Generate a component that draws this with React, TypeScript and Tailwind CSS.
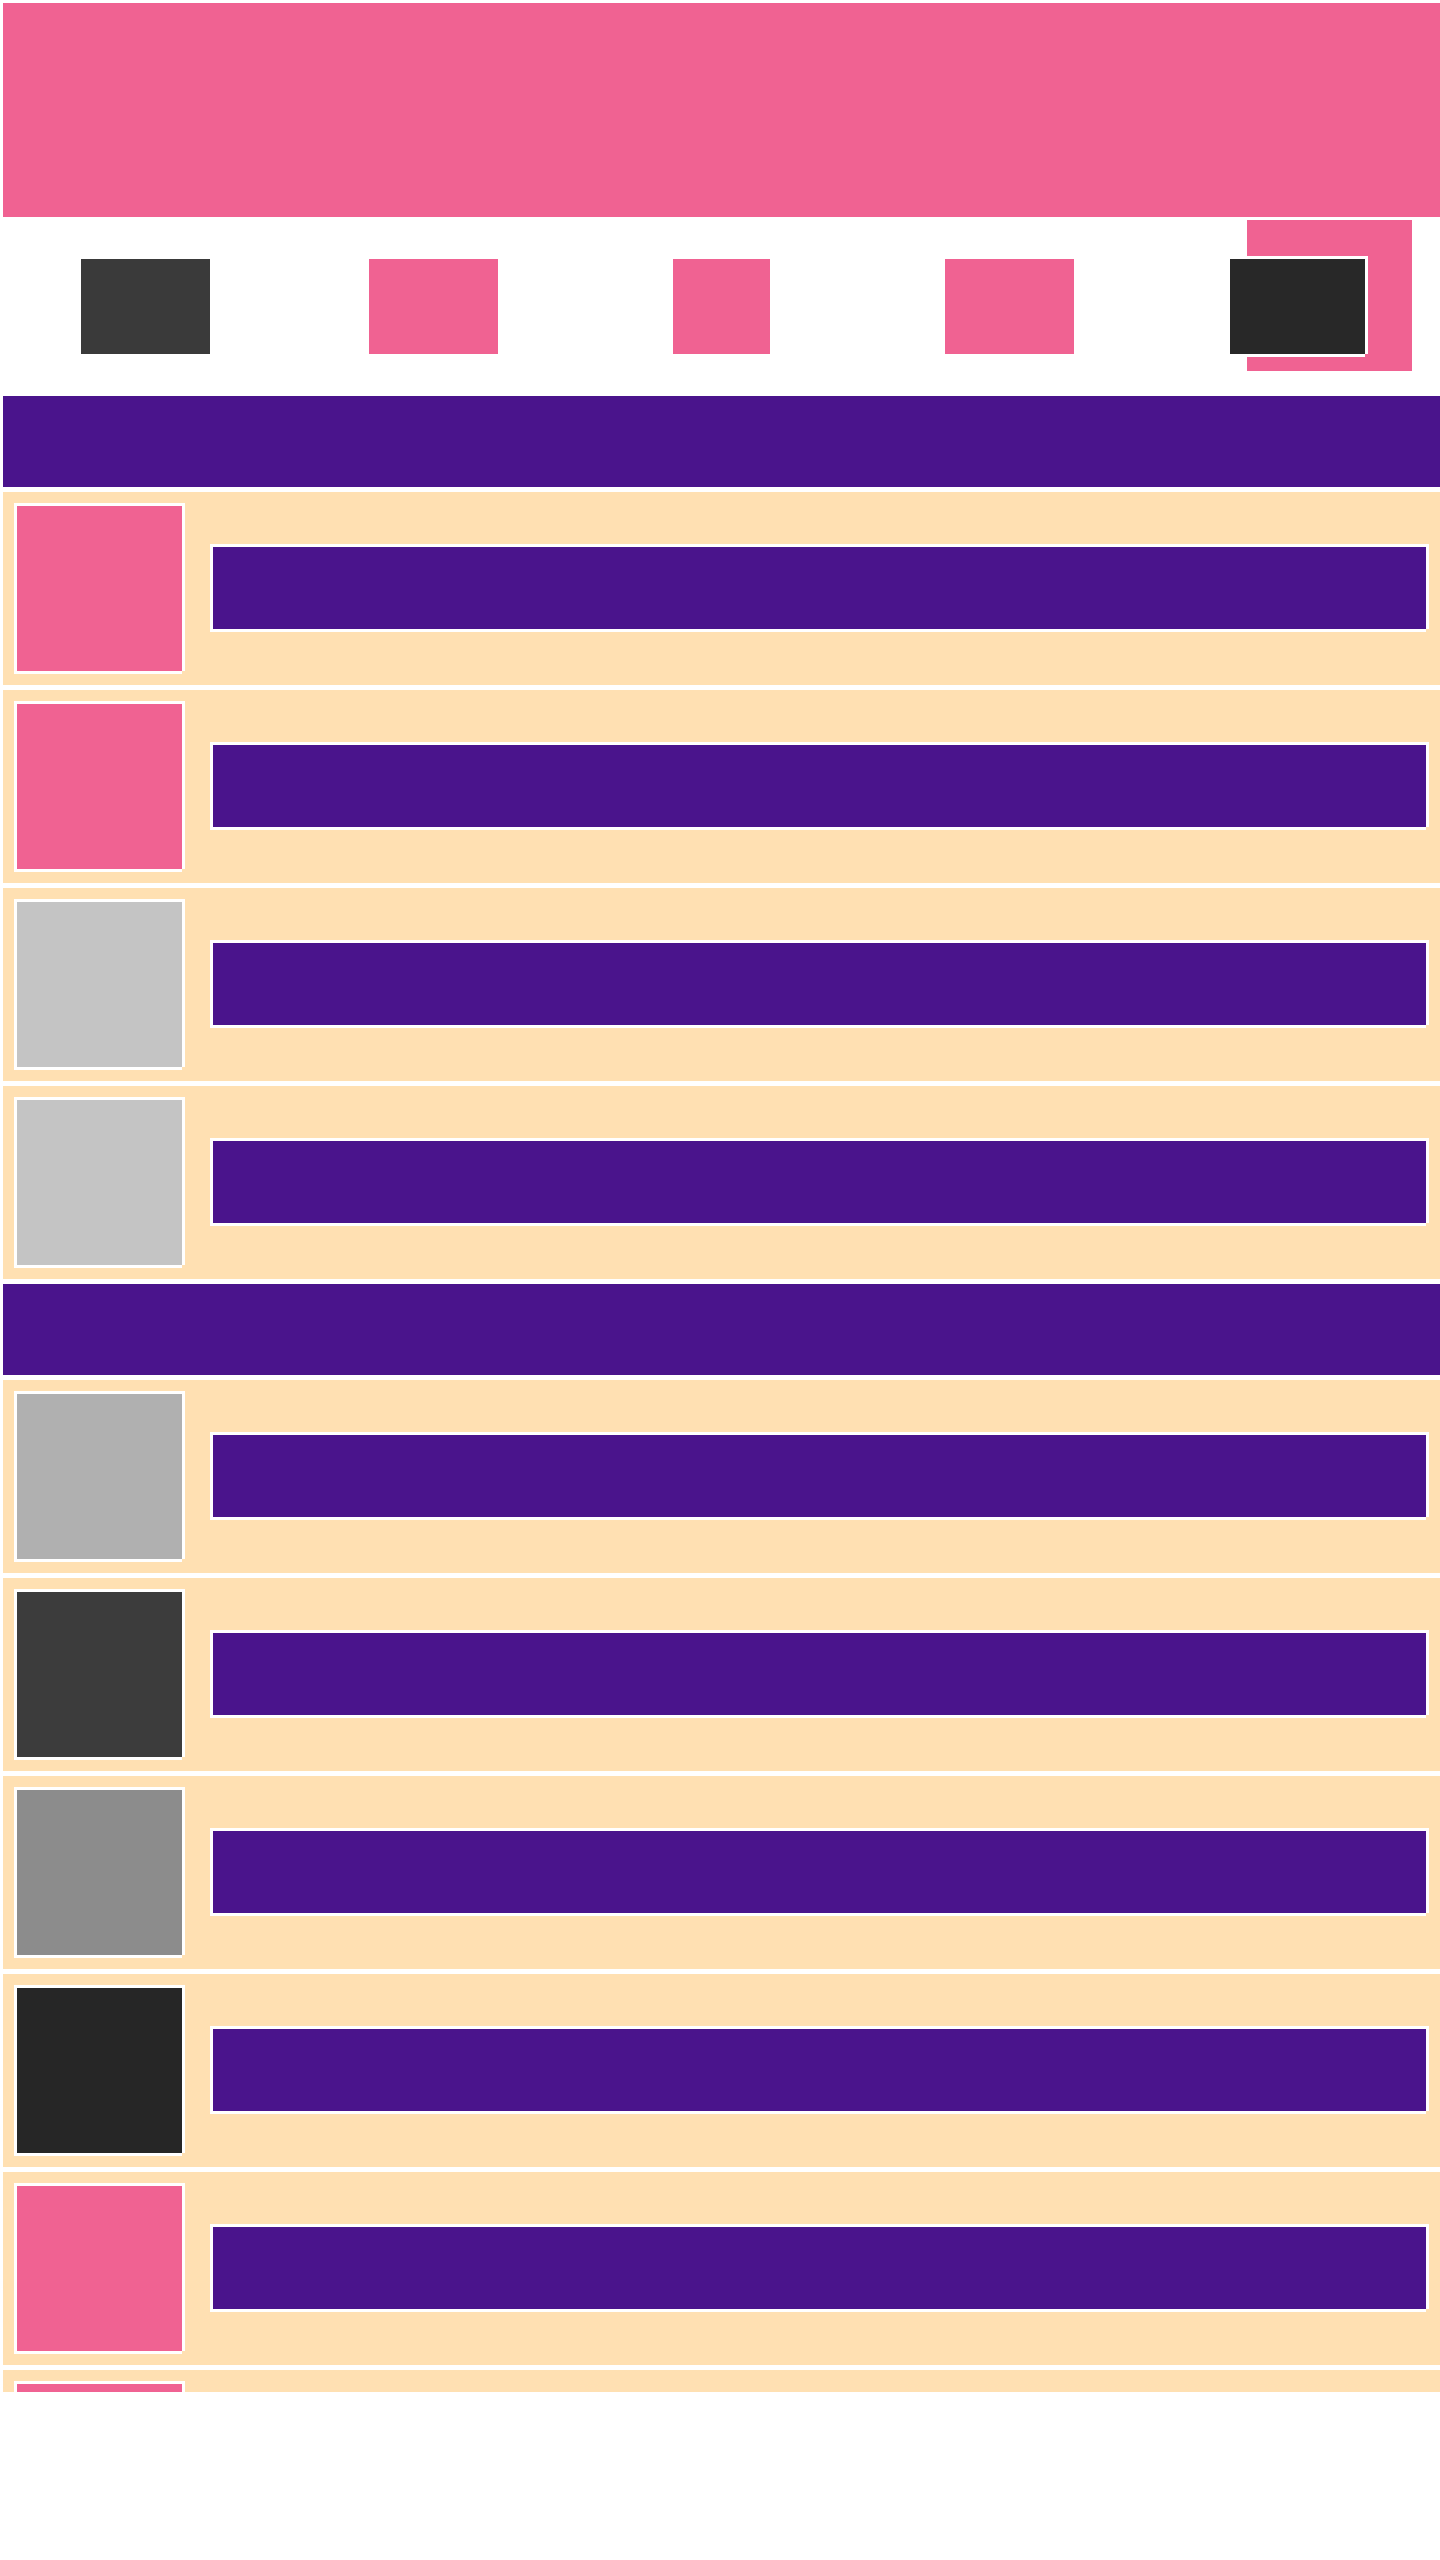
const block =
  "border-t-3 border-l-3 border-white shadow-[3px_0_0_#fff,0_3px_0_#fff]";

const tabs = [
  { id: "first", look: "w-[132px] bg-[#3a3a3a]" },
  { id: "second", look: "w-[132px] bg-[#f06292]" },
  { id: "third", look: "w-[100px] bg-[#f06292]" },
  { id: "fourth", look: "w-[132px] bg-[#f06292]" },
  { id: "fifth", look: "w-[138px] bg-[#282828]" },
];

const groups = [
  {
    id: "upper",
    thumbs: ["bg-[#f06292]", "bg-[#f06292]", "bg-[#c4c4c4]", "bg-[#c4c4c4]"],
  },
  {
    id: "lower",
    thumbs: [
      "bg-[#b0b0b0]",
      "bg-[#3c3c3c]",
      "bg-[#8c8c8c]",
      "bg-[#262626]",
      "bg-[#f06292]",
      "bg-[#f06292]",
    ],
  },
];

function TabStrip() {
  return (
    <nav className="relative h-[176px] shrink-0">
      <div className="absolute top-0 right-7 h-[154px] w-[168px] border-t-3 border-l-3 border-white bg-[#f06292]" />
      <ul className="relative grid h-full grid-cols-5 items-center justify-items-center">
        {tabs.map((tab) => (
          <li key={tab.id} className={`h-[98px] ${block} ${tab.look}`} />
        ))}
      </ul>
    </nav>
  );
}

function Row({ thumb }: { thumb: string }) {
  return (
    <li className="mb-0.5 flex items-start gap-7 border-t-3 border-l-3 border-white bg-[#ffe0b2] px-[11px] pt-[11px] pb-[14px]">
      <div className={`size-[168px] shrink-0 ${block} ${thumb}`} />
      <div className={`mt-[41px] mr-[3px] h-[85px] flex-1 bg-[#4a148c] ${block}`} />
    </li>
  );
}

export default function App() {
  return (
    <div className="flex h-screen flex-col overflow-hidden bg-white">
      <header className="h-[217px] shrink-0 border-t-3 border-l-3 border-white bg-[#f06292]" />
      <TabStrip />
      <main className="min-h-0 flex-1 overflow-hidden">
        {groups.map((group) => (
          <section key={group.id}>
            <div className="mb-0.5 h-[94px] border-t-3 border-l-3 border-white bg-[#4a148c]" />
            <ul>
              {group.thumbs.map((thumb, index) => (
                <Row key={index} thumb={thumb} />
              ))}
            </ul>
          </section>
        ))}
      </main>
      <footer className="h-[168px] shrink-0 bg-white" />
    </div>
  );
}
